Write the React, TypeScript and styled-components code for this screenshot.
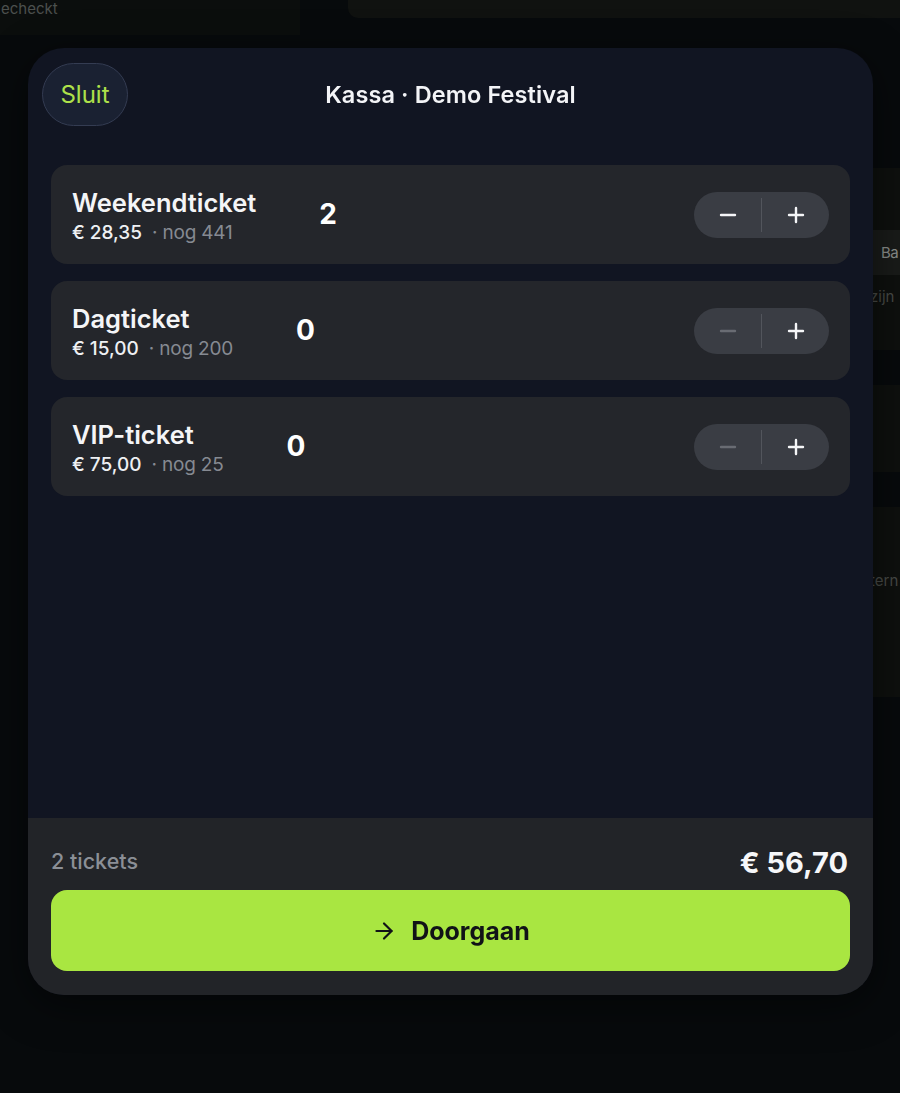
import React from "react";
import styled, { createGlobalStyle } from "styled-components";
import { ArrowRight, Minus, Plus } from "lucide-react";

const Global = createGlobalStyle`
  * { box-sizing: border-box; }
  html, body { margin: 0; padding: 0; background: #070a0c; }
  body { font-family: Inter, "Noto Sans", sans-serif; overflow: hidden; }
  #root { min-height: 1093px; }
`;

/* ---------- dimmed page behind the sheet ---------- */
const BgPage = styled.div`
  height: 1093px;
  display: flex;
  flex-direction: column;
  background: #070a0c;
`;

const BgTopRow = styled.div`
  display: flex;
  align-items: flex-start;
  gap: 48px;
`;

const BgTopLeft = styled.div`
  width: 300px;
  height: 35px;
  background: #0b0e0d;
  color: #4c504d;
  font-size: 15px;
  line-height: 18px;
  padding-left: 1px;
`;

const BgTopRight = styled.div`
  flex: 1;
  height: 18px;
  background: #101210;
  border-bottom-left-radius: 10px;
`;

const BgSide = styled.div`
  margin-top: 133px;
  margin-left: 870px;
  display: flex;
  flex-direction: column;
  gap: 35px;
`;

const BgCard = styled.div<{ $h: number }>`
  height: ${(p) => p.$h}px;
  background: #0e100e;
  display: flex;
  flex-direction: column;
  padding-top: 62px;
  color: #474a47;
  font-size: 15px;
`;

const BgButton = styled.div`
  height: 45px;
  margin-left: 2px;
  background: #191b19;
  color: #8a8d8a;
  font-size: 15px;
  letter-spacing: -0.5px;
  display: flex;
  align-items: center;
  padding-left: 9px;
`;

const BgText = styled.div<{ $mt: number }>`
  margin-top: ${(p) => p.$mt}px;
  color: #474a47;
  font-size: 15px;
  white-space: nowrap;
`;

/* ---------- sheet ---------- */
const Sheet = styled.div`
  position: fixed;
  top: 48px;
  left: 28px;
  width: 845px;
  height: 947px;
  border-radius: 36px;
  background: #111522;
  overflow: hidden;
  display: flex;
  flex-direction: column;
  box-shadow: 0 10px 40px rgba(0, 0, 0, 0.5);
`;

const Header = styled.div`
  position: relative;
  display: flex;
  align-items: center;
  justify-content: center;
  padding: 15px 14px 0;
  height: 78px;
`;

const CloseButton = styled.button`
  position: absolute;
  left: 14px;
  top: 15px;
  width: 86px;
  height: 63px;
  border-radius: 32px;
  border: 1px solid #343c52;
  background: #1a2132;
  color: #aee14a;
  font-family: Inter, sans-serif;
  font-size: 24px;
  font-weight: 400;
  padding: 0;
  cursor: pointer;
`;

const Title = styled.h1`
  margin: 0;
  color: #f3f4f7;
  font-size: 23.5px;
  font-weight: 600;
  letter-spacing: 0.1px;
`;

const List = styled.div`
  flex: 1;
  display: flex;
  flex-direction: column;
  gap: 17px;
  padding: 39px 23px 0;
`;

const Card = styled.div`
  height: 99px;
  border-radius: 16px;
  background: #24262b;
  display: flex;
  align-items: center;
  padding: 0 21px 0 21px;
`;

const Info = styled.div`
  display: flex;
  flex-direction: column;
  gap: 4px;
  margin-top: 4px;
`;

const Name = styled.div`
  color: #f4f5f7;
  font-size: 25.5px;
  font-weight: 600;
  line-height: 28px;
`;

const PriceLine = styled.div`
  display: flex;
  align-items: baseline;
  gap: 10px;
  font-size: 19px;
  line-height: 24px;
`;

const Price = styled.span`
  color: #eef0f3;
  font-weight: 500;
`;

const Stock = styled.span`
  color: #868a92;
  font-weight: 400;
  letter-spacing: -0.2px;
`;

const Qty = styled.div`
  margin-left: 63px;
  margin-top: -2px;
  color: #ffffff;
  font-size: 28px;
  font-weight: 700;
`;

const Stepper = styled.div`
  margin-left: auto;
  width: 135px;
  height: 46px;
  border-radius: 23px;
  background: #3a3d44;
  display: flex;
  align-items: center;
`;

const StepButton = styled.button<{ $disabled?: boolean }>`
  flex: 1;
  height: 100%;
  border: none;
  background: transparent;
  display: flex;
  align-items: center;
  justify-content: center;
  color: ${(p) => (p.$disabled ? "#696c73" : "#f5f6f8")};
  padding: 0;
  cursor: pointer;
`;

const Divider = styled.div`
  width: 1px;
  height: 34px;
  background: #52555c;
`;

const Footer = styled.div`
  background: #222428;
  padding: 25px 23px 24px;
  display: flex;
  flex-direction: column;
  gap: 11px;
`;

const SummaryRow = styled.div`
  display: flex;
  align-items: center;
  justify-content: space-between;
  height: 36px;
`;

const Count = styled.div`
  color: #8b8f96;
  font-size: 21.5px;
  font-weight: 500;
`;

const Total = styled.div`
  color: #f6f7f9;
  font-size: 29px;
  font-weight: 700;
  margin-right: 2px;
  margin-top: 2px;
`;

const Proceed = styled.button`
  height: 81px;
  border: none;
  border-radius: 16px;
  background: #a9e641;
  color: #111317;
  font-family: Inter, sans-serif;
  font-size: 25px;
  font-weight: 700;
  display: flex;
  align-items: center;
  justify-content: center;
  gap: 14px;
  cursor: pointer;
`;

type Ticket = { name: string; price: string; left: number; qty: number };

const tickets: Ticket[] = [
  { name: "Weekendticket", price: "€ 28,35", left: 441, qty: 2 },
  { name: "Dagticket", price: "€ 15,00", left: 200, qty: 0 },
  { name: "VIP-ticket", price: "€ 75,00", left: 25, qty: 0 },
];

export default function App() {
  return (
    <>
      <Global />
      <BgPage>
        <BgTopRow>
          <BgTopLeft>echeckt</BgTopLeft>
          <BgTopRight />
        </BgTopRow>
        <BgSide>
          <BgCard $h={182}>
            <BgButton>Ba</BgButton>
            <BgText $mt={12}>zijn</BgText>
          </BgCard>
          <BgCard $h={87} />
          <BgCard $h={190}>
            <BgText $mt={2}>tern</BgText>
          </BgCard>
        </BgSide>
      </BgPage>

      <Sheet>
        <Header>
          <CloseButton>Sluit</CloseButton>
          <Title>Kassa · Demo Festival</Title>
        </Header>
        <List>
          {tickets.map((t) => (
            <Card key={t.name}>
              <Info>
                <Name>{t.name}</Name>
                <PriceLine>
                  <Price>{t.price}</Price>
                  <Stock>· nog {t.left}</Stock>
                </PriceLine>
              </Info>
              <Qty>{t.qty}</Qty>
              <Stepper>
                <StepButton $disabled={t.qty === 0} aria-label="minder">
                  <Minus size={24} strokeWidth={2.4} />
                </StepButton>
                <Divider />
                <StepButton aria-label="meer">
                  <Plus size={24} strokeWidth={2.4} />
                </StepButton>
              </Stepper>
            </Card>
          ))}
        </List>
        <Footer>
          <SummaryRow>
            <Count>2 tickets</Count>
            <Total>€ 56,70</Total>
          </SummaryRow>
          <Proceed>
            <ArrowRight size={26} strokeWidth={2} />
            Doorgaan
          </Proceed>
        </Footer>
      </Sheet>
    </>
  );
}
